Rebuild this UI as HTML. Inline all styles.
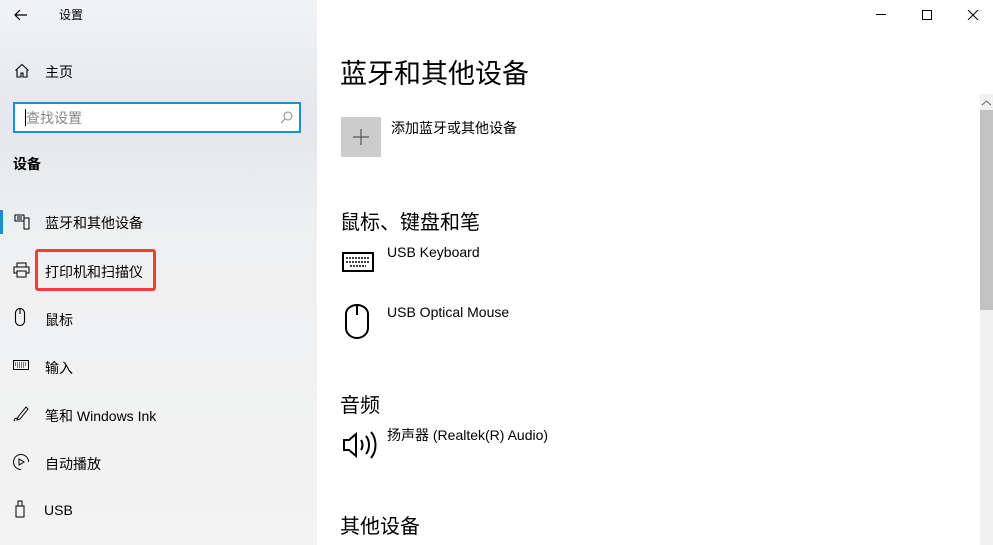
<!DOCTYPE html>
<html><head><meta charset="utf-8"><style>
*{margin:0;padding:0;box-sizing:border-box}
body{width:993px;height:545px;overflow:hidden;background:#fff;font-family:"Liberation Sans","Noto Sans CJK SC",sans-serif;color:#000;position:relative}
.side{position:absolute;left:0;top:0;width:317px;height:545px;background:linear-gradient(180deg,#f1f3f5 0%,#e4e7eb 22%,#eff0f1 45%,#f3f3f3 100%)}
.t{position:absolute;white-space:nowrap}
.ic{position:absolute}
.s14{font-size:14px}
</style></head><body>
<div class="side">
  <svg class="ic" style="left:13px;top:7px" width="16" height="16" viewBox="0 0 16 16"><path d="M14 8H2M7 3L2 8l5 5" stroke="#000" stroke-width="1.2" fill="none"/></svg>
  <div class="t" style="left:59px;top:6px;font-size:12px">设置</div>
  <svg class="ic" style="left:14px;top:63px" width="16" height="15" viewBox="0 0 16 15"><path d="M1.5 7.5L8 1.5l6.5 6M3 6v8h4V10h2v4h4V6" stroke="#000" stroke-width="1.1" fill="none"/></svg>
  <div class="t s14" style="left:45px;top:62px">主页</div>
  <div style="position:absolute;left:13px;top:102px;width:288px;height:31px;border:2px solid #1c8fd2;background:#fff"></div>
  <div style="position:absolute;left:25px;top:109px;width:1px;height:17px;background:#000"></div>
  <div class="t s14" style="left:26px;top:108px;color:#888">查找设置</div>
  <svg class="ic" style="left:280px;top:111px" width="13" height="13" viewBox="0 0 13 13"><circle cx="8" cy="5" r="4" stroke="#888" fill="none"/><path d="M5 8L1 12" stroke="#888"/></svg>
  <div class="t s14" style="left:13px;top:154px;font-weight:bold">设备</div>
  <div style="position:absolute;left:0;top:210px;width:3px;height:24px;background:#1c8fd2"></div>
  <svg class="ic" style="left:14px;top:214px" width="16" height="16" viewBox="0 0 16 16"><rect x="1" y="1" width="9" height="6" fill="none" stroke="#000"/><rect x="10" y="4" width="5" height="11" fill="none" stroke="#000"/><path d="M3 3h5M3 5h5" stroke="#000"/></svg>
  <div class="t s14" style="left:45px;top:213px">蓝牙和其他设备</div>
  <svg class="ic" style="left:13px;top:262px" width="17" height="16" viewBox="0 0 17 16"><rect x="4" y="1" width="9" height="4" fill="none" stroke="#000"/><rect x="1" y="5" width="15" height="6" fill="none" stroke="#000"/><rect x="4" y="9" width="9" height="6" fill="#f1f1f1" stroke="#000"/></svg>
  <div style="position:absolute;left:35px;top:249px;width:121px;height:42px;border:3px solid #f03c3c;border-radius:3px"></div>
  <div class="t s14" style="left:45px;top:262px">打印机和扫描仪</div>
  <svg class="ic" style="left:14px;top:308px" width="12" height="18" viewBox="0 0 12 18"><path d="M1.5 5a4.5 4.5 0 019 0v8a4.5 4.5 0 01-9 0z M6 1v5" stroke="#000" fill="none" stroke-width="1.1"/></svg>
  <div class="t s14" style="left:45px;top:310px">鼠标</div>
  <svg class="ic" style="left:13px;top:360px" width="16" height="10" viewBox="0 0 16 10"><rect x=".5" y=".5" width="15" height="9" fill="none" stroke="#000"/><path d="M2 3h12M2 5h12M4 7h8" stroke="#000" stroke-dasharray="1 1"/></svg>
  <div class="t s14" style="left:45px;top:358px">输入</div>
  <svg class="ic" style="left:12px;top:405px" width="18" height="18" viewBox="0 0 18 18"><path d="M6 12l8-10 2 2-8 10-3 1z M3 16c-2-1 0-3 2-3" stroke="#000" fill="none"/></svg>
  <div class="t s14" style="left:45px;top:406px">笔和 Windows Ink</div>
  <svg class="ic" style="left:12px;top:453px" width="18" height="18" viewBox="0 0 18 18"><path d="M9 16.5A7.5 7.5 0 1 1 16.5 9" stroke="#000" fill="none"/><path d="M7 6v6l5-3z" stroke="#000" fill="none"/></svg>
  <div class="t s14" style="left:45px;top:454px">自动播放</div>
  <svg class="ic" style="left:15px;top:500px" width="10" height="18" viewBox="0 0 10 18"><rect x="1" y="6" width="8" height="11" fill="none" stroke="#000"/><rect x="3" y="1" width="4" height="5" fill="none" stroke="#000"/></svg>
  <div class="t s14" style="left:44px;top:502px">USB</div>
</div>
<svg class="ic" style="left:875px;top:10px" width="110" height="10" viewBox="0 0 110 10"><path d="M1 4.5h10" stroke="#000"/><rect x="47.5" y=".5" width="9" height="9" fill="none" stroke="#000"/><path d="M93 0l10 10M103 0L93 10" stroke="#000"/></svg>
<div class="t" style="left:340px;top:52px;font-size:27px">蓝牙和其他设备</div>
<div style="position:absolute;left:341px;top:117px;width:40px;height:40px;background:#cccccc"></div>
<svg class="ic" style="left:353px;top:129px" width="16" height="16"><path d="M8 0v16M0 8h16" stroke="#555" stroke-width="1.2"/></svg>
<div class="t s14" style="left:391px;top:118px">添加蓝牙或其他设备</div>
<div class="t" style="left:340px;top:206px;font-size:20px">鼠标、键盘和笔</div>
<svg class="ic" style="left:342px;top:252px" width="32" height="20" viewBox="0 0 32 20"><rect x="1" y="1" width="30" height="18" fill="none" stroke="#000" stroke-width="2"/><path d="M4 6h24M4 10h24M8 14h16" stroke="#000" stroke-width="1.5" stroke-dasharray="2 1"/></svg>
<div class="t s14" style="left:387px;top:244px">USB Keyboard</div>
<svg class="ic" style="left:344px;top:304px" width="26" height="36" viewBox="0 0 26 36"><path d="M2 10a11 9 0 0122 0v14a11 10 0 01-22 0z M13 1v10" stroke="#000" fill="none" stroke-width="2"/></svg>
<div class="t s14" style="left:387px;top:304px">USB Optical Mouse</div>
<div class="t" style="left:340px;top:389px;font-size:20px">音频</div>
<svg class="ic" style="left:342px;top:430px" width="36" height="30" viewBox="0 0 36 30"><path d="M2 10h5l7-6v22l-7-6H2z" stroke="#000" fill="none" stroke-width="2"/><path d="M19 10c2 3 2 7 0 10M24 6c4 5 4 13 0 18M29 2c6 7 6 19 0 26" stroke="#000" fill="none" stroke-width="2"/></svg>
<div class="t s14" style="left:387px;top:425px">扬声器 (Realtek(R) Audio)</div>
<div class="t" style="left:340px;top:510px;font-size:20px">其他设备</div>
<div style="position:absolute;left:980px;top:94px;width:13px;height:451px;background:#f0f0f0"></div>
<svg class="ic" style="left:981px;top:100px" width="11" height="6"><path d="M1 5l4.5-4 4.5 4" stroke="#666" fill="none"/></svg>
<div style="position:absolute;left:980px;top:110px;width:13px;height:200px;background:#c2c2c2"></div>
</body></html>
